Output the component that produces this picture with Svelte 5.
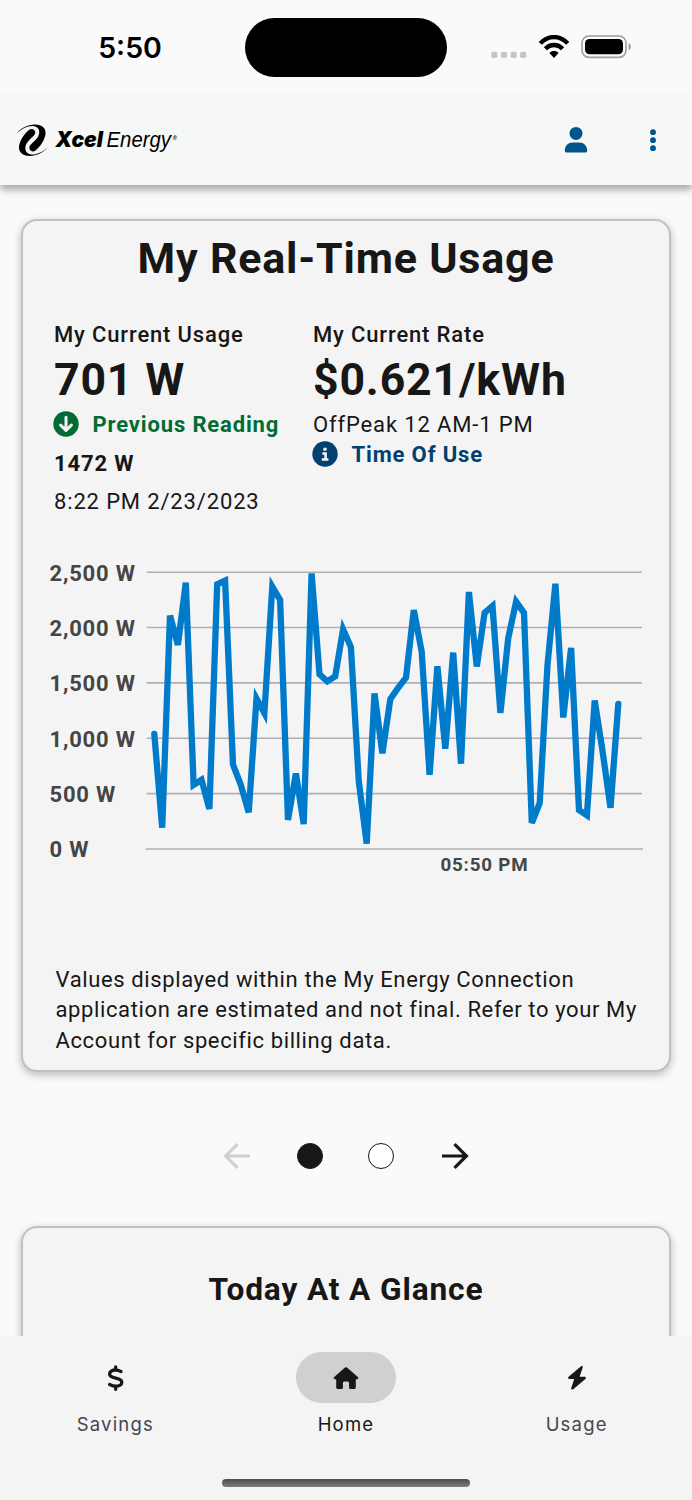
<script lang="ts">
	interface Tab {
		id: string;
		label: string;
	}

	const tabs: Tab[] = [
		{ id: 'savings', label: 'Savings' },
		{ id: 'home', label: 'Home' },
		{ id: 'usage', label: 'Usage' }
	];

	// Readings in watts, oldest first
	const readings = [
		1040, 192, 2108, 1843, 2405, 580, 625, 361, 2390, 2423, 761, 580, 331, 1359, 1227, 2369, 2249,
		262, 682, 225, 2489, 1578, 1515, 1560, 1984, 1825, 610, 48, 1404, 863, 1353, 1455, 1548, 2159,
		1783, 670, 1651, 905, 1774, 770, 2321, 1648, 2132, 2195, 1230, 1903, 2234, 2132, 235, 415, 1663,
		2396, 1188, 1816, 352, 304, 1341, 881, 373, 1311
	];
	const ticks = [2500, 2000, 1500, 1000, 500, 0];

	const plot = { left: 131.3, step: 7.865, top: 22.2, bottom: 299 };

	let activeTab = $state('home');
	let page = $state(0);

	function yFor(watts: number) {
		return plot.bottom - (watts / 2500) * (plot.bottom - plot.top);
	}

	const points = readings
		.map((w, i) => `${(plot.left + i * plot.step).toFixed(1)},${yFor(w).toFixed(1)}`)
		.join(' ');

	// One half of the logo mark, the other half is the same shape turned around
	const swirl =
		'M.7 13.2C5 8 11.5 4.5 19 4.500 26 4.500 30 8.200 29.600 13.600 29 19.500 24.500 26.500 19.500 30.600 16.500 32.600 13 30.800 13.400 27.300 13.700 24.800 18 22 20.800 18.600 25 13.400 24 6.400 17 5.900 11.500 5.600 5.500 8.800.7 13.200z';
</script>

<div class="screen">
	<div class="status-bar">
		<span class="clock">5:50</span>
		<div class="island"></div>
		<div class="status-icons">
			<svg class="signal" width="36" height="8" viewBox="0 0 36 8" fill="#c6c6c6">
				<rect x="0.3" y="0.7" width="6.2" height="6.4" rx="1.8" />
				<rect x="9.9" y="0.7" width="6.2" height="6.4" rx="1.8" />
				<rect x="19.5" y="0.7" width="6.2" height="6.4" rx="1.8" />
				<rect x="29.1" y="0.7" width="6.2" height="6.4" rx="1.8" />
			</svg>
			<svg class="wifi" width="32" height="24" viewBox="0 0 32 24">
				<g fill="none" stroke="#000" stroke-width="4.3">
					<path d="M2.3 8.4C10-.1 22-.1 29.7 8.4" />
					<path d="M7.4 13.8c4.9-5.1 12.3-5.1 17.2 0" />
				</g>
				<path d="M11.4 17.9c2.6-2.4 6.6-2.4 9.2 0L16 22.9z" />
			</svg>
			<svg class="battery" width="52" height="24" viewBox="0 0 52 24">
				<rect x="1" y="1" width="44" height="21.4" rx="7" fill="none" stroke="#9d9d9d" stroke-width="1.6" />
				<rect x="4" y="4" width="38" height="15.3" rx="4.6" />
				<path d="M47.6 8.1c3 1.6 3 5.7 0 7.2z" fill="#9d9d9d" />
			</svg>
		</div>
	</div>

	<header class="app-bar">
		<svg class="logo" width="170" height="40" viewBox="0 0 170 40" role="img" aria-label="Xcel Energy">
			<path d={swirl} />
			<path d={swirl} transform="rotate(180 16.3 20.2)" />
			<text x="39.5" y="27" class="brand-bold" textLength="47.5" lengthAdjust="spacingAndGlyphs">Xcel</text>
			<text x="90.5" y="27" class="brand-light" textLength="64.5" lengthAdjust="spacingAndGlyphs">Energy</text>
			<text x="156.5" y="19.5" class="brand-mark">®</text>
		</svg>
		<button type="button" class="account" aria-label="Account">
			<svg width="24" height="28" viewBox="0 0 24 28">
				<circle cx="12" cy="7.4" r="6.5" />
				<path
					d="M8.7 16.4h6.6c4.5 0 7.9 3.5 7.9 8.2 0 1.4-.6 2-1.800 2H2.600c-1.200 0-1.800-.6-1.800-2 0-4.700 3.400-8.200 7.900-8.200z"
				/>
			</svg>
		</button>
		<button type="button" class="more" aria-label="More options">
			<svg width="8" height="24" viewBox="0 0 8 24">
				<circle cx="4" cy="4.2" r="2.9" />
				<circle cx="4" cy="12.2" r="2.9" />
				<circle cx="4" cy="20.2" r="2.9" />
			</svg>
		</button>
	</header>

	<main>
		<section class="card usage-card">
			<h1>My Real-Time Usage</h1>

			<div class="metrics">
				<div class="metric">
					<div class="metric-label">My Current Usage</div>
					<div class="metric-value">701 W</div>
					<div class="metric-link previous">
						<svg width="26" height="26" viewBox="0 0 26 26">
							<circle cx="13" cy="13" r="12.7" />
							<path
								d="M13 6.3v12.4M7.6 14.1l5.4 5.2 5.4-5.2"
								fill="none"
								stroke="#f4f4f4"
								stroke-width="3"
								stroke-linecap="round"
								stroke-linejoin="round"
							/>
						</svg>
						<span>Previous Reading</span>
					</div>
					<div class="reading">1472 W</div>
					<div class="reading-time">8:22 PM 2/23/2023</div>
				</div>
				<div class="metric">
					<div class="metric-label">My Current Rate</div>
					<div class="metric-value">$0.621/kWh</div>
					<div class="period">OffPeak 12 AM-1 PM</div>
					<div class="metric-link tou">
						<svg width="26" height="26" viewBox="0 0 26 26">
							<circle cx="13" cy="13" r="12.7" />
							<circle cx="13" cy="8.3" r="1.8" fill="#f4f4f4" />
							<path d="M10.4 12.4h3.2v6M9.8 18.4h6.6" fill="none" stroke="#f4f4f4" stroke-width="2.5" />
						</svg>
						<span>Time Of Use</span>
					</div>
				</div>
			</div>

			<svg class="chart" width="646" height="340" viewBox="0 0 646 340">
				{#each ticks as tick}
					{#if tick > 0}
						<line x1="123.7" x2="619" y1={yFor(tick)} y2={yFor(tick)} class="grid" />
					{:else}
						<line x1="122.5" x2="620" y1={yFor(tick)} y2={yFor(tick)} class="grid" />
					{/if}
					<text x="26.5" y={yFor(tick) + 8.4} class="tick">{tick.toLocaleString('en-US')} W</text>
				{/each}
				<polyline {points} class="series" />
				<text x="417.4" y="321" class="time">05:50 PM</text>
			</svg>

			<p class="disclaimer">
				Values displayed within the My Energy Connection application are estimated and not final. Refer to
				your My Account for specific billing data.
			</p>
		</section>

		<div class="pager">
			<button type="button" aria-label="Previous" disabled={page === 0} onclick={() => (page = 0)}>
				<svg width="28" height="28" viewBox="0 0 28 28" class="arrow">
					<path d="M27 14H3M14.5 2.2L2.6 14l11.9 11.8" />
				</svg>
			</button>
			{#each [0, 1] as index}
				<button
					type="button"
					class="dot"
					class:active={page === index}
					aria-label="Page {index + 1}"
					onclick={() => (page = index)}
				></button>
			{/each}
			<button type="button" aria-label="Next" disabled={page === 1} onclick={() => (page = 1)}>
				<svg width="28" height="28" viewBox="0 0 28 28" class="arrow">
					<path d="M1 14h24M13.5 2.2L25.4 14 13.5 25.8" />
				</svg>
			</button>
		</div>

		<section class="card glance-card">
			<h2>Today At A Glance</h2>
		</section>
	</main>

	<nav class="tab-bar">
		<div class="tabs">
			{#each tabs as tab}
				<button
					type="button"
					class="tab"
					class:active={activeTab === tab.id}
					onclick={() => (activeTab = tab.id)}
				>
					<span class="pill">
						{#if tab.id === 'savings'}
							<svg width="18" height="28" viewBox="0 0 18 28">
								<path
									d="M9.7 2.8v3M9.7 22.3v3M15 7.5C12.900 6.500 11.200 6 9.400 6 6 6 3.600 7.500 3.600 10c0 5.600 12.200 2.700 12.200 8.200 0 2.500-2.600 4-6 4-2.200 0-4.300-.7-6.200-1.700"
									fill="none"
									stroke="#171717"
									stroke-width="3.3"
									stroke-linecap="round"
									stroke-linejoin="round"
								/>
							</svg>
						{:else if tab.id === 'home'}
							<svg width="26" height="24" viewBox="0 0 26 24">
								<path
									d="M12 1.500c.6-.5 1.400-.5 2 0l10.800 9.500c1 .9.5 2.200-.8 2.200h-1.200v8c0 1.200-.8 1.900-1.900 1.900h-3.100c-1 0-1.700-.7-1.700-1.700v-4.200c0-1-.7-1.700-1.700-1.700h-2.800c-1 0-1.700.7-1.700 1.700v4.200c0 1-.7 1.700-1.700 1.700H5.100c-1.100 0-1.900-.7-1.900-1.900v-8H2c-1.300 0-1.800-1.300-.8-2.200z"
								/>
							</svg>
						{:else}
							<svg width="20" height="24" viewBox="0 0 20 24">
								<path
									d="M15.600 1.700c.6-1.300-.6-2.200-1.800-1.300L1.600 10.700c-1 .9-.5 2.300.8 2.300h4.800L4.300 22c-.4 1.300.9 2.100 1.900 1.200l12.200-10.100c1-.9.5-2.400-.8-2.400h-5z"
								/>
							</svg>
						{/if}
					</span>
					<span class="tab-label">{tab.label}</span>
				</button>
			{/each}
		</div>
		<div class="home-indicator"></div>
	</nav>
</div>

<style>
	:global(body) {
		margin: 0;
		background: #fafafa;
	}

	.screen {
		display: flex;
		flex-direction: column;
		width: 692px;
		height: 1500px;
		overflow: hidden;
		background: #fafafa;
		color: #171717;
		font-family: Roboto, sans-serif;
		font-size: 22px;
	}

	button {
		display: flex;
		align-items: center;
		justify-content: center;
		padding: 0;
		border: 0;
		background: none;
		font: inherit;
		color: inherit;
		cursor: pointer;
	}

	svg {
		display: block;
		flex: none;
	}

	.status-bar {
		display: grid;
		grid-template-columns: 245px 202px 1fr;
		flex: none;
		height: 92px;
	}

	.clock {
		margin-left: 15px;
		line-height: 95px;
		text-align: center;
		font-family: Inter, sans-serif;
		font-size: 28.5px;
		font-weight: 600;
		color: #000;
	}

	.island {
		height: 59px;
		margin-top: 18px;
		border-radius: 30px;
		background: #000;
	}

	.status-icons {
		display: flex;
		align-items: flex-start;
		padding: 35px 0 0 43.5px;
	}

	.signal {
		margin-top: 15.5px;
	}

	.wifi,
	.battery {
		margin-left: 11px;
	}

	.app-bar {
		display: flex;
		align-items: center;
		flex: none;
		height: 93px;
		background: #f6f8f8;
		box-shadow: 0 5px 7px rgba(0, 0, 0, 0.32);
		/* keep the shadow below the bar only */
		clip-path: inset(0 0 -20px 0);
	}

	.logo {
		margin: 2px 0 0 16px;
	}

	.brand-bold {
		font-family: Inter, sans-serif;
		font-size: 21.5px;
		font-weight: 900;
		font-style: italic;
	}

	.brand-light {
		font-family: 'Liberation Sans', sans-serif;
		font-size: 22px;
		font-style: italic;
	}

	.brand-mark {
		font-size: 6px;
		font-style: italic;
	}

	.account {
		margin: 3px 0 0 378px;
		fill: #00558c;
	}

	.more {
		margin: 2px 0 0 61px;
		fill: #00558c;
	}

	main {
		flex: 1;
		min-height: 0;
		padding: 34px 21px 0;
	}

	.card {
		box-sizing: border-box;
		border: 2px solid #c0c0c0;
		border-radius: 16px;
		background: #f4f4f4;
		box-shadow: 0 3px 9px rgba(0, 0, 0, 0.26);
	}

	.usage-card {
		height: 853px;
		padding-top: 15px;
	}

	h1,
	h2 {
		margin: 0;
		text-align: center;
		font-weight: 700;
	}

	h1 {
		line-height: 44px;
		font-size: 43px;
		letter-spacing: 0.8px;
	}

	h2 {
		line-height: 40px;
		font-size: 31.7px;
		letter-spacing: 0.85px;
	}

	.metrics {
		display: grid;
		grid-template-columns: 259px 1fr;
		height: 201px;
		margin: 40px 0 0 31px;
		white-space: nowrap;
		letter-spacing: 0.85px;
	}

	.metric-label {
		line-height: 30px;
		font-weight: 500;
	}

	.metric-value {
		line-height: 60px;
		font-size: 44.6px;
		font-weight: 700;
	}

	.metric-link {
		display: flex;
		align-items: center;
		gap: 13.5px;
		height: 29px;
		margin-left: -1px;
		font-weight: 700;
	}

	.metric-link svg {
		margin-top: -2px;
	}

	.previous {
		color: #006b33;
		fill: #006b33;
	}

	.tou {
		color: #004170;
		fill: #004170;
	}

	.reading {
		margin-top: 5.5px;
		line-height: 38.5px;
		font-weight: 700;
	}

	.reading-time {
		line-height: 38.5px;
	}

	.period {
		line-height: 30px;
	}

	.chart {
		margin-top: 29px;
	}

	.grid {
		stroke: #b0b0b0;
		stroke-width: 1.6;
	}

	.tick,
	.time {
		fill: #454545;
		font-weight: 700;
		letter-spacing: 0.8px;
	}

	.tick {
		font-size: 22px;
	}

	.time {
		font-size: 18.8px;
	}

	.series {
		fill: none;
		stroke: #007aca;
		stroke-width: 6.3;
		stroke-linecap: round;
	}

	.disclaimer {
		width: 596px;
		margin: 74.5px 0 0 32.5px;
		line-height: 30.7px;
		letter-spacing: 0.62px;
	}

	.pager {
		display: flex;
		align-items: center;
		height: 141px;
		padding: 13px 0 0 202px;
	}

	.pager button + button {
		margin-left: 46.5px;
	}

	.pager .dot {
		box-sizing: border-box;
		width: 26px;
		height: 26px;
		margin-left: 45px;
		border: 1.5px solid #171717;
		border-radius: 50%;
		background: #fff;
	}

	.pager .dot.active {
		margin-left: 46.4px;
		background: #171717;
	}

	.arrow {
		fill: none;
		stroke: #171717;
		stroke-width: 3.2;
	}

	button:disabled .arrow {
		stroke: #d0d0d0;
	}

	.glance-card {
		height: 300px;
		padding-top: 42px;
	}

	.tab-bar {
		position: relative;
		flex: none;
		height: 164px;
		background: #f4f4f4;
	}

	.tabs {
		display: grid;
		grid-template-columns: repeat(3, 1fr);
		padding-top: 16px;
	}

	.tab {
		flex-direction: column;
		fill: #171717;
		color: #47464f;
	}

	.tab.active {
		color: #171717;
	}

	.pill {
		display: flex;
		align-items: center;
		justify-content: center;
		width: 100px;
		height: 51px;
		border-radius: 26px;
	}

	.tab.active .pill {
		background: #d0d0d0;
	}

	.tab-label {
		margin-top: 5px;
		line-height: 32px;
		font-family: Inter, sans-serif;
		font-size: 18.5px;
		letter-spacing: 1.2px;
	}

	.home-indicator {
		width: 248px;
		height: 8px;
		margin: 39px auto 0;
		border-radius: 4px;
		background: linear-gradient(#4c4c4c, #7c7c7c);
	}
</style>
